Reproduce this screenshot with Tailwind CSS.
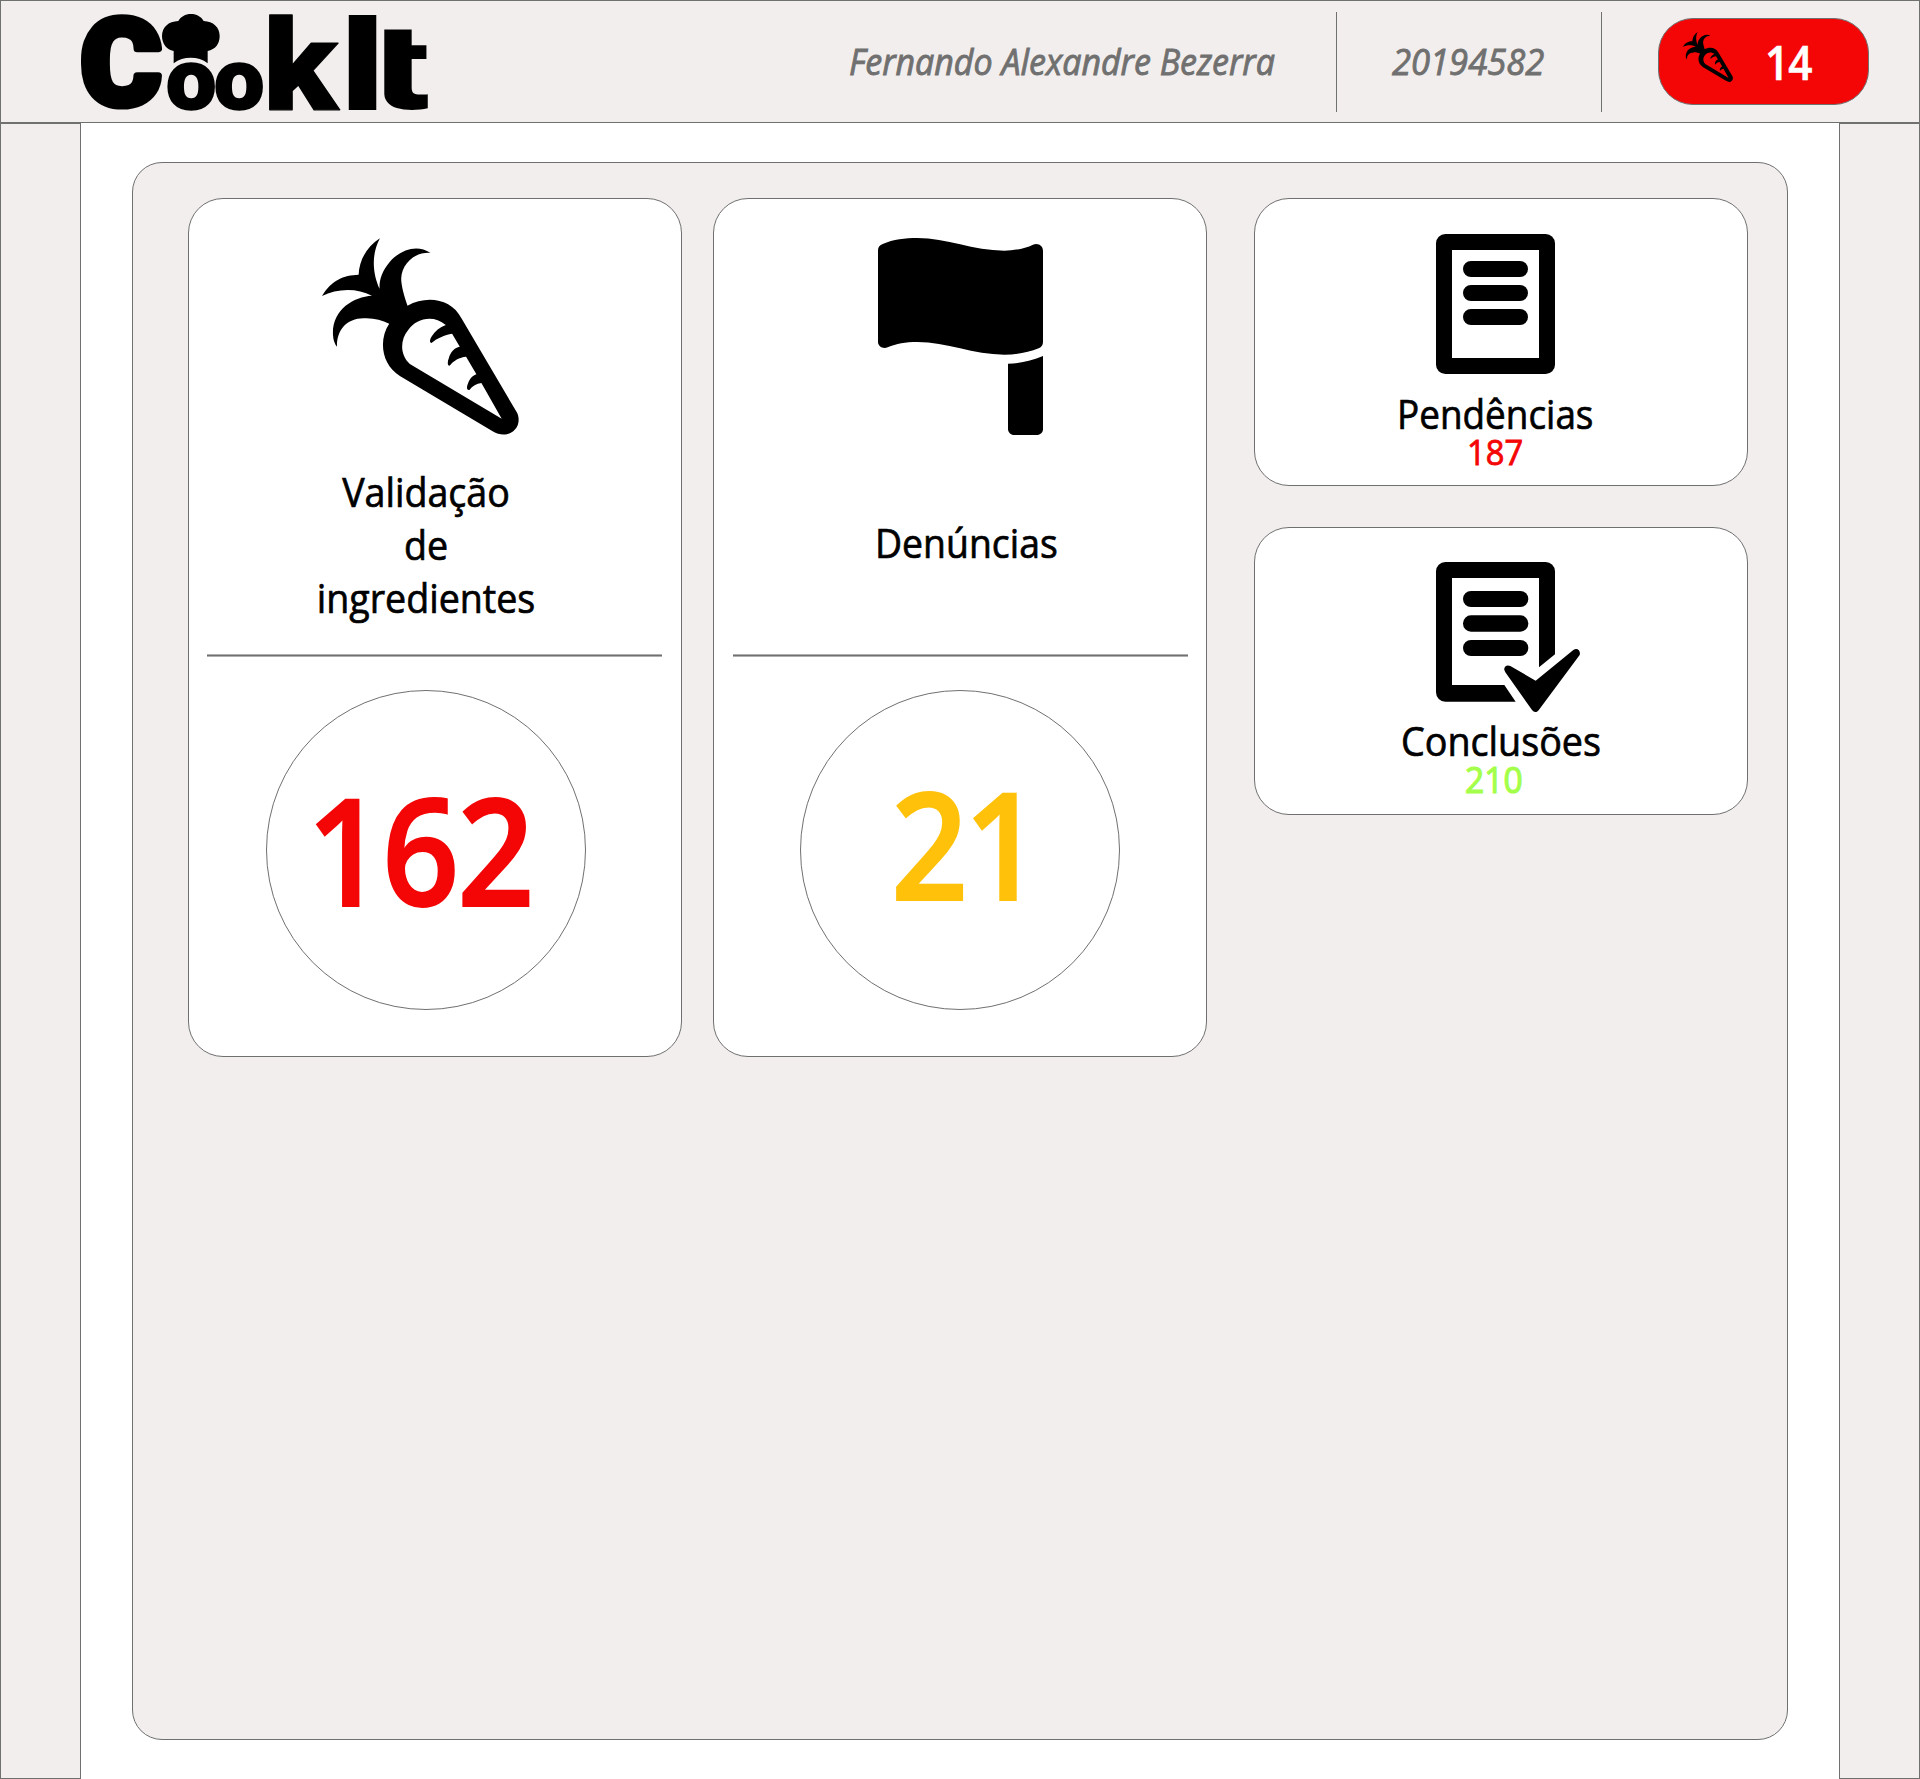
<!DOCTYPE html>
<html lang="pt-BR">
<head>
<meta charset="utf-8">
<title>CookIt</title>
<script src="https://cdn.jsdelivr.net/npm/@tailwindcss/browser@4"></script>
</head>
<body class="flex h-[1779px] w-[1920px] flex-col overflow-hidden bg-white font-['Open_Sans',sans-serif] text-black">

<svg class="hidden">
  <symbol id="carrot" viewBox="66 54 592 591">
    <path fill-rule="evenodd" d="M240 54C200 80 178 120 176 164C130 166 95 180 66 228C110 205 170 202 216 227C160 230 95 270 99 345C100 362 105 373 111 380C110 330 140 296 190 295C220 293 245 300 268 311C235 360 245 435 300 468L580 635C600 648 630 648 645 630C660 615 660 590 650 575L485 295C455 235 380 225 323 257C312 225 304 195 304 175C306 130 345 95 392 98C350 70 300 90 270 125C245 155 238 180 239 206C222 170 210 110 240 54ZM438 315C400 283 350 295 325 330C300 360 300 405 330 432L606 597L545 489C530 491 518 498 509 510C500 512 500 500 505 490C510 475 520 467 530 463L499 410C480 412 460 422 450 437C442 438 443 425 447 415C452 395 465 383 480 380L457 341C435 345 410 355 395 369C388 368 390 358 396 349C405 333 420 322 438 315Z"/>
  </symbol>
</svg>

<header class="flex h-[123px] shrink-0 items-start border border-[#707070] bg-[#f2eeed] text-[#707070]">
  <svg class="mt-[13px] ml-20 h-[97px] w-[348px] shrink-0 overflow-visible fill-black" viewBox="81 14 348 97" font-family="Roboto" font-weight="900" font-size="100" stroke="#000" stroke-linejoin="round">
    <clipPath id="tStem"><rect x="384.3" y="10" width="43.7" height="104"/></clipPath>
    <text transform="translate(80.6 105.4) scale(1.235 1.205)" stroke-width="6">C</text>
    <text transform="translate(165.9 108.7) scale(.896 .857)" stroke-width="2">o</text>
    <text transform="translate(213.9 108.7) scale(.896 .857)" stroke-width="2">o</text>
    <text transform="translate(263.2 109.4) scale(1.36 1.263)" stroke-width="1">k</text>
    <text transform="translate(338.3 110) scale(1.61 1.345)" stroke="none">I</text>
    <g clip-path="url(#tStem)"><text transform="translate(371.2 108.8) scale(1.7 1.206)" stroke="none">t</text></g>
    <path stroke="none" transform="translate(60 0) scale(.33333)" d="M341 190V153C320 150 306 130 306 108C306 82 325 64 355 63C362 50 376 42 393 42C410 42 424 50 431 63C460 64 479 82 479 108C479 132 466 148 443 153V190C415 168 370 168 341 190Z"/>
  </svg>
  <div class="mt-[43px] ml-[420px] w-[487px] shrink-0 origin-left scale-x-[.943] text-[36px] leading-[36px] whitespace-nowrap italic [-webkit-text-stroke:.9px_#707070]"><span>Fernando Alexandre Bezerra</span></div>
  <div class="mt-[11px] h-[100px] w-px shrink-0 bg-[#707070]"></div>
  <div class="mt-[43px] ml-[55px] w-[209px] shrink-0 origin-left scale-x-[.96] text-[36px] leading-[36px] italic [-webkit-text-stroke:.9px_#707070]">20194582</div>
  <div class="mt-[11px] h-[100px] w-px shrink-0 bg-[#707070]"></div>
  <div class="mt-[17px] ml-14 flex h-[87px] w-[211px] shrink-0 items-start rounded-[35px] border border-[#707070] bg-[#f40606]">
    <svg class="mt-[13px] ml-6 size-[50px] fill-black"><use href="#carrot"/></svg>
    <span class="mt-5 ml-8 origin-left scale-x-[.9] text-[47px] leading-[47px] font-semibold tracking-[-1px] text-white [-webkit-text-stroke:.6px_#fff]">14</span>
  </div>
</header>

<div class="flex flex-1">
  <aside class="w-[81px] border border-[#707070] bg-[#f2eeed]"></aside>
  <main class="flex-1 px-[51px] pt-[39px]">
    <div class="flex h-[1578px] w-[1656px] items-start rounded-[30px] border border-[#707070] bg-[#f2eeed] pt-[35px] pl-[55px]">

      <section class="flex h-[859px] w-[494px] flex-col items-start rounded-[35px] border border-[#707070] bg-white">
        <svg class="mt-[39px] ml-[133px] h-[197px] w-[197px]"><use href="#carrot"/></svg>
        <h2 class="mt-[30px] ml-[87px] w-[300px] scale-x-[.94] text-center text-[40px] leading-[53px] [-webkit-text-stroke:.7px_#000]">Validação<br>de<br>ingredientes</h2>
        <div class="mt-[30px] ml-[18px] h-[3px] w-[455px] border-y border-[#b0b0b0] bg-[#707070]"></div>
        <div class="mt-[33px] ml-[77px] flex size-80 items-start rounded-full border border-[#707070] pt-[83px] pl-10">
          <span class="origin-left scale-x-[.91] text-[148px] leading-[150px] font-semibold tracking-[-2px] text-[#f40606] [-webkit-text-stroke:2px_#f40606]">162</span>
        </div>
      </section>

      <section class="ml-[31px] flex h-[859px] w-[494px] flex-col items-start rounded-[35px] border border-[#707070] bg-white">
        <svg class="mt-[39px] ml-[164px] h-[197px] w-[165px]" viewBox="84 54 495 591">
          <path d="M84 90C84 82 90 75 98 72C130 58 165 54 202 54C290 54 370 92 463 92C490 92 525 86 549 74C565 68 579 78 579 92V365C579 375 575 381 566 385C535 398 500 404 463 404C370 404 290 366 202 366C165 366 140 371 113 382C98 388 84 378 84 366Z"/>
          <path d="M474 431C512 430 546 422 579 408V627C579 638 571 645 560 645H493C482 645 474 637 474 627Z"/>
        </svg>
        <h2 class="mt-[81px] ml-[161px] origin-left scale-x-[.934] text-[40px] leading-[53px] [-webkit-text-stroke:.7px_#000]">Denúncias</h2>
        <div class="mt-[85px] ml-[19px] h-[3px] w-[455px] border-y border-[#b0b0b0] bg-[#707070]"></div>
        <div class="mt-[33px] ml-[86px] flex size-80 items-start rounded-full border border-[#707070] pt-[77px] pl-[90px]">
          <span class="origin-left scale-x-[.91] text-[148px] leading-[150px] font-semibold tracking-[-4px] text-[#ffc10a] [-webkit-text-stroke:2px_#ffc10a]">21</span>
        </div>
      </section>

      <div class="ml-[47px] flex flex-col gap-[41px]">
        <section class="flex h-72 w-[494px] flex-col items-start rounded-[35px] border border-[#707070] bg-white">
          <svg class="mt-[35px] ml-[181px] h-[140px] w-[119px]" viewBox="168 72 357 420">
            <path fill-rule="evenodd" d="M196 72H497A28 28 0 0 1 525 100V464A28 28 0 0 1 497 492H196A28 28 0 0 1 168 464V100A28 28 0 0 1 196 72ZM216 120V444H477V120Z"/>
            <rect x="249" y="153" width="195" height="48" rx="24"/>
            <rect x="249" y="225" width="195" height="48" rx="24"/>
            <rect x="249" y="297" width="195" height="48" rx="24"/>
          </svg>
          <h2 class="mt-5 ml-[142px] origin-left scale-x-[.922] text-[40px] leading-10 [-webkit-text-stroke:.7px_#000]">Pendências</h2>
          <span class="ml-[212px] origin-left scale-x-[.935] text-[35px] leading-9 text-[#f40606] [-webkit-text-stroke:.9px_#f40606]">187</span>
        </section>

        <section class="flex h-72 w-[494px] flex-col items-start rounded-[35px] border border-[#707070] bg-white">
          <svg class="mt-[34px] ml-[181px] h-[150px] w-36" viewBox="168 66 432 450">
            <path fill-rule="evenodd" d="M196 66H497A28 28 0 0 1 525 94V343L477 382V114H216V435H373L407 485H196A28 28 0 0 1 168 457V94A28 28 0 0 1 196 66Z"/>
            <rect x="249" y="153" width="196" height="48" rx="24"/>
            <rect x="249" y="226" width="196" height="49" rx="24"/>
            <rect x="249" y="300" width="196" height="48" rx="24"/>
            <path d="M373 390C371 379 381 373 391 378L467 422L580 330C592 321 603 333 599 345L477 509C471 518 462 518 456 510L376 397Z"/>
          </svg>
          <h2 class="mt-[9px] ml-[146px] origin-left scale-x-[.942] text-[40px] leading-10 [-webkit-text-stroke:.7px_#000]">Conclusões</h2>
          <span class="mt-px ml-[210px] origin-left scale-x-[.937] text-[36px] leading-9 text-[#a4ff4a] [-webkit-text-stroke:1.2px_#a4ff4a]">210</span>
        </section>
      </div>
    </div>
  </main>
  <aside class="w-[81px] border border-[#707070] bg-[#f2eeed]"></aside>
</div>
</body>
</html>
